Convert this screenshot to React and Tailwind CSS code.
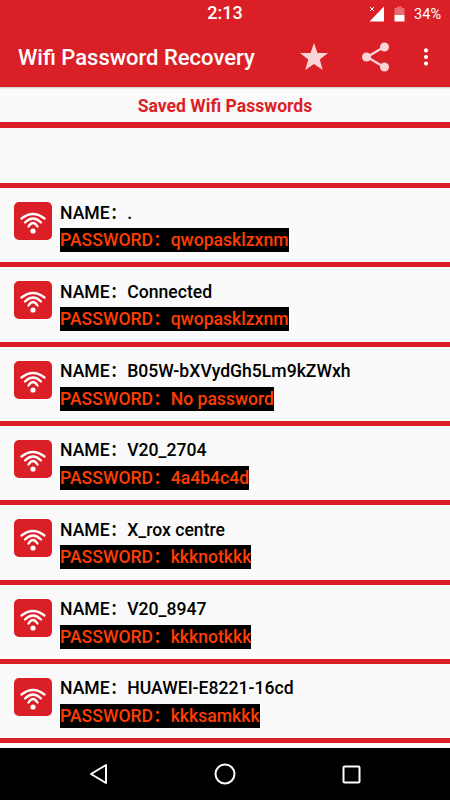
import React from "react";

const networks = [
  { name: ".", password: "qwopasklzxnm" },
  { name: "Connected", password: "qwopasklzxnm" },
  { name: "B05W-bXVydGh5Lm9kZWxh", password: "No password" },
  { name: "V20_2704", password: "4a4b4c4d" },
  { name: "X_rox centre", password: "kkknotkkk" },
  { name: "V20_8947", password: "kkknotkkk" },
  { name: "HUAWEI-E8221-16cd", password: "kkksamkkk" },
];

const WifiBadge = () => (
  <div className="w-[38px] h-[38px] rounded-[5px] bg-[#db1f27] shrink-0">
    <svg width="38" height="38" viewBox="0 0 38 38" fill="none" stroke="#fff" strokeWidth="2.3" strokeLinecap="round">
      <path d="M7.5 16.5Q19 7.5 30.5 16.5" />
      <path d="M11 20.5Q19 12.5 27 20.5" />
      <path d="M14.5 24.5Q19 17.5 23.5 24.5" />
      <circle cx="19" cy="29" r="2.6" fill="#fff" stroke="none" />
    </svg>
  </div>
);

const Row = ({ name, password }) => (
  <div className="h-[79.33px] flex flex-col">
    <div className="h-[5px] bg-[#db1f27] shrink-0" />
    <div className="flex-1 flex items-start pl-[14px] pt-[14px] gap-2">
      <WifiBadge />
      <div className="flex flex-col items-start -mt-[1.5px]">
        <div className="text-[17.6px] leading-[24px] font-medium text-black">NAME：{name}</div>
        <div className="mt-[3.5px] bg-black text-[#ff3d00] text-[17.6px] leading-[24px] font-medium">PASSWORD：{password}</div>
      </div>
    </div>
  </div>
);

export default function App() {
  return (
    <div className="w-[450px] h-[800px] flex flex-col overflow-hidden bg-[#fafafa] font-['Roboto','Noto_Sans_CJK_SC',sans-serif]">
      {/* status bar */}
      <div className="h-[28px] bg-[#db1f27] relative flex items-center justify-end pr-[9px] text-white shrink-0">
        <span className="absolute left-0 right-0 -top-[1px] text-center text-[18px] leading-[28px] font-medium">2:13</span>
        <svg width="16" height="16" viewBox="0 0 16 16" className="mr-[9px]">
          <path d="M15 0.5V15.5H0.5Z" fill="#fff" />
          <path d="M0.5 0.5L5 5M5 0.5L0.5 5" stroke="#db1f27" strokeWidth="2.5" />
          <path d="M1 1L5 5M5 1L1 5" stroke="#fff" strokeWidth="1" />
        </svg>
        <svg width="11" height="16" viewBox="0 0 11 16" className="mr-[9px]">
          <path d="M0.5 2H3V0.5H8V2H10.5V9H0.5Z" fill="#fff" fillOpacity="0.35" />
          <path d="M0.5 9H10.5V15.5H0.5Z" fill="#fff" />
        </svg>
        <span className="text-[14.5px] mt-[2px]">34%</span>
      </div>

      {/* toolbar */}
      <div className="h-[59px] bg-[#db1f27] flex items-center pl-[18px] pr-[21px] shrink-0">
        <span className="text-white text-[22px] font-medium flex-1">Wifi Password Recovery</span>
        <svg width="28" height="27" viewBox="0 0 28 27" className="mr-[34px] mb-[2px]" fill="#fad4d6">
          <path d="M14 0L17.5 10H28L19.8 16.4L22.7 27L14 21L5.3 27L8.2 16.4L0 10H10.5Z" />
        </svg>
        <svg width="27" height="30" viewBox="0 0 27 30" className="mr-[34px] mb-[2px]" fill="#fad4d6" stroke="#fad4d6" strokeWidth="2.2">
          <path d="M22 5L5 15L22 25" fill="none" />
          <circle cx="22.5" cy="5" r="4.5" stroke="none" />
          <circle cx="4.5" cy="15" r="4.5" stroke="none" />
          <circle cx="22.5" cy="25" r="4.5" stroke="none" />
        </svg>
        <svg width="6" height="18" viewBox="0 0 6 18" className="mb-[2px]" fill="#fff">
          <circle cx="3" cy="2.4" r="2.1" />
          <circle cx="3" cy="9" r="2.1" />
          <circle cx="3" cy="15.6" r="2.1" />
        </svg>
      </div>

      <div className="h-[35px] pt-[3px] flex items-center justify-center shrink-0 shadow-[inset_0_3px_2px_-2px_rgba(0,0,0,0.2)]">
        <span className="text-[#db1f27] text-[17.6px] font-bold">Saved Wifi Passwords</span>
      </div>
      <div className="h-[6px] bg-[#db1f27] shrink-0" />
      <div className="h-[55px] shrink-0" />

      {networks.map((n, i) => (
        <Row key={i} name={n.name} password={n.password} />
      ))}
      <div className="h-[5px] bg-[#db1f27] shrink-0" />
      <div className="flex-1" />

      {/* nav bar */}
      <div className="h-[52px] bg-black flex items-center justify-between pl-[89px] pr-[89px] shrink-0">
        <svg width="19" height="22" viewBox="0 0 19 22" fill="none" stroke="#fff" strokeWidth="2" strokeLinejoin="round">
          <path d="M17 2V20L2 11Z" />
        </svg>
        <svg width="22" height="22" viewBox="0 0 22 22" fill="none" stroke="#fff" strokeWidth="2">
          <circle cx="11" cy="11" r="9.5" />
        </svg>
        <svg width="19" height="19" viewBox="0 0 19 19" fill="none" stroke="#fff" strokeWidth="2" strokeLinejoin="round">
          <rect x="1.5" y="1.5" width="16" height="16" rx="1" />
        </svg>
      </div>
    </div>
  );
}
